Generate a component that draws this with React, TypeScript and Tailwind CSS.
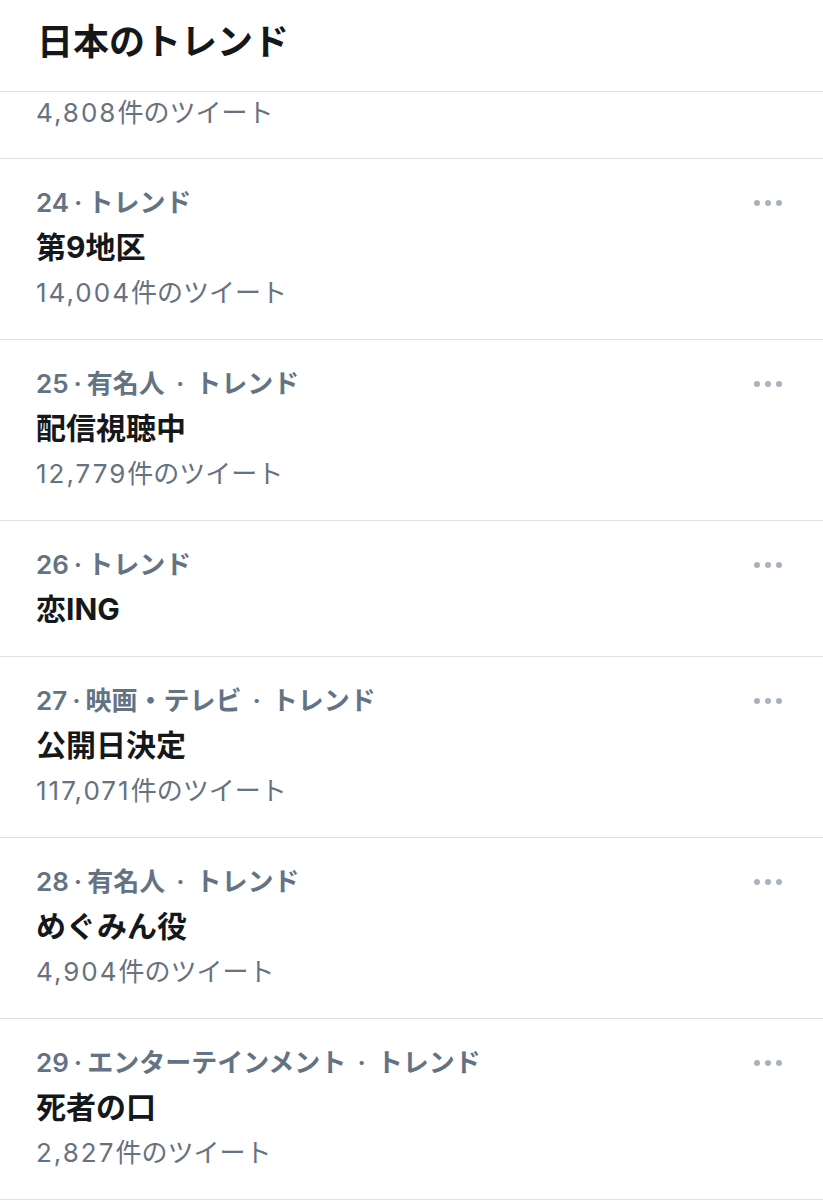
import React from "react";

type Trend = { rank: number; category: string[]; name: string; num?: string };

const trends: Trend[] = [
  { rank: 24, category: ["トレンド"], name: "第9地区", num: "14,004" },
  { rank: 25, category: ["有名人", "トレンド"], name: "配信視聴中", num: "12,779" },
  { rank: 26, category: ["トレンド"], name: "恋ING" },
  { rank: 27, category: ["映画・テレビ", "トレンド"], name: "公開日決定", num: "117,071" },
  { rank: 28, category: ["有名人", "トレンド"], name: "めぐみん役", num: "4,904" },
  { rank: 29, category: ["エンターテインメント", "トレンド"], name: "死者の口", num: "2,827" },
];

const font = { fontFamily: 'Inter, "Noto Sans CJK JP", "Noto Sans", sans-serif' };

function Dots() {
  return (
    <div className="flex items-center gap-[5px]">
      <span className="block w-[6px] h-[6px] rounded-full bg-[#aab2bc]" />
      <span className="block w-[6px] h-[6px] rounded-full bg-[#aab2bc]" />
      <span className="block w-[6px] h-[6px] rounded-full bg-[#aab2bc]" />
    </div>
  );
}

function Count({ num }: { num: string }) {
  return (
    <div className="text-[26px] leading-[45px] font-normal text-[#66727f]">
      <span className="tracking-[2px]">{num}</span>件のツイート
    </div>
  );
}

function Row({ t }: { t: Trend }) {
  return (
    <div className="border-b border-[#dddfe2] pl-[36px] pr-[41px] pt-[21px] pb-[24px]">
      <div className="flex items-center justify-between h-[45px]">
        <div className="text-[26px] leading-[45px] font-semibold text-[#637384]">
          {t.rank}
          <span className="mx-[5px]">·</span>
          {t.category.map((c, i) => (
            <React.Fragment key={i}>
              {i > 0 && <span className="mx-[11px]">·</span>}
              {c}
            </React.Fragment>
          ))}
        </div>
        <Dots />
      </div>
      <div className="text-[30px] leading-[45px] font-bold text-[#15181b]">{t.name}</div>
      {t.num && <Count num={t.num} />}
    </div>
  );
}

export default function App() {
  return (
    <div className="w-[823px] min-h-[1200px] bg-white overflow-hidden" style={font}>
      <div className="h-[92px] border-b border-[#dddfe2] pl-[37px] pt-[20px]">
        <div className="text-[36px] leading-[45px] font-bold text-[#15181b]">日本のトレンド</div>
      </div>
      <div className="h-[67px] border-b border-[#dddfe2] pl-[36px] pt-[6px]">
        <div className="text-[26px] leading-[30px] text-[#66727f]">
          <span className="tracking-[2px]">4,808</span>件のツイート
        </div>
      </div>
      {trends.map((t) => (
        <Row key={t.rank} t={t} />
      ))}
    </div>
  );
}
